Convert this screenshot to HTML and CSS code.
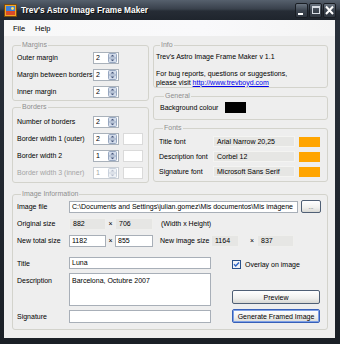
FILE: index.html
```html
<!DOCTYPE html>
<html>
<head>
<meta charset="utf-8">
<link rel="stylesheet" href="styles.css">
</head>
<body>
<div class="win">
  <div class="titlebar">
    <svg class="appicon" width="13" height="13" viewBox="0 0 13 13">
      <rect x="0.5" y="0.5" width="12" height="12" fill="#f4a623" stroke="#7a4a10"/>
      <rect x="2" y="2" width="9" height="9" fill="#3d7fd6"/>
      <rect x="2" y="7" width="9" height="4" fill="#d84a2a"/>
      <circle cx="8.5" cy="4.5" r="1.4" fill="#ffe36a"/>
    </svg>
    <span class="title">Trev's Astro Image Frame Maker</span>
    <div class="capbtns">
      <span class="cbtn"><svg width="13" height="15" viewBox="0 0 13 15"><rect x="3" y="10" width="5" height="2" fill="#fff"/></svg></span>
      <span class="cbtn"><svg width="13" height="15" viewBox="0 0 13 15"><rect x="3.5" y="3.5" width="7" height="7" fill="none" stroke="#d8dde4"/><rect x="3" y="3" width="8" height="2" fill="#d8dde4"/></svg></span>
      <span class="cbtn"><svg width="13" height="15" viewBox="0 0 13 15"><path d="M3 3.5 L10 11 M10 3.5 L3 11" stroke="#fff" stroke-width="2"/></svg></span>
    </div>
  </div>
  <div class="frame">
    <div class="menubar"><span>File</span><span>Help</span></div>
    <div class="client">
      <div class="top">
        <div class="col col-left">
          <fieldset class="grp grp-margins">
            <legend>Margins</legend>
            <div class="row"><span class="lbl">Outer margin</span><span class="numbox"><span class="val">2</span><svg class="spin" width="9" height="10" viewBox="0 0 9 10"><rect x="0.5" y="0.5" width="8" height="9" rx="1" fill="#d3dcea" stroke="#97a7c0"/><line x1="1" y1="5" x2="8" y2="5" stroke="#97a7c0"/><path d="M2.5 3.6 L4.5 1.8 L6.5 3.6Z" fill="#44557a"/><path d="M2.5 6.4 L4.5 8.2 L6.5 6.4Z" fill="#44557a"/></svg></span></div>
            <div class="row"><span class="lbl">Margin between borders</span><span class="numbox"><span class="val">2</span><svg class="spin" width="9" height="10" viewBox="0 0 9 10"><rect x="0.5" y="0.5" width="8" height="9" rx="1" fill="#d3dcea" stroke="#97a7c0"/><line x1="1" y1="5" x2="8" y2="5" stroke="#97a7c0"/><path d="M2.5 3.6 L4.5 1.8 L6.5 3.6Z" fill="#44557a"/><path d="M2.5 6.4 L4.5 8.2 L6.5 6.4Z" fill="#44557a"/></svg></span></div>
            <div class="row"><span class="lbl">Inner margin</span><span class="numbox"><span class="val">2</span><svg class="spin" width="9" height="10" viewBox="0 0 9 10"><rect x="0.5" y="0.5" width="8" height="9" rx="1" fill="#d3dcea" stroke="#97a7c0"/><line x1="1" y1="5" x2="8" y2="5" stroke="#97a7c0"/><path d="M2.5 3.6 L4.5 1.8 L6.5 3.6Z" fill="#44557a"/><path d="M2.5 6.4 L4.5 8.2 L6.5 6.4Z" fill="#44557a"/></svg></span></div>
          </fieldset>
          <fieldset class="grp grp-borders">
            <legend>Borders</legend>
            <div class="row"><span class="lbl">Number of borders</span><span class="numbox"><span class="val">2</span><svg class="spin" width="9" height="10" viewBox="0 0 9 10"><rect x="0.5" y="0.5" width="8" height="9" rx="1" fill="#d3dcea" stroke="#97a7c0"/><line x1="1" y1="5" x2="8" y2="5" stroke="#97a7c0"/><path d="M2.5 3.6 L4.5 1.8 L6.5 3.6Z" fill="#44557a"/><path d="M2.5 6.4 L4.5 8.2 L6.5 6.4Z" fill="#44557a"/></svg></span></div>
            <div class="row"><span class="lbl">Border width 1 (outer)</span><span class="numbox"><span class="val">2</span><svg class="spin" width="9" height="10" viewBox="0 0 9 10"><rect x="0.5" y="0.5" width="8" height="9" rx="1" fill="#d3dcea" stroke="#97a7c0"/><line x1="1" y1="5" x2="8" y2="5" stroke="#97a7c0"/><path d="M2.5 3.6 L4.5 1.8 L6.5 3.6Z" fill="#44557a"/><path d="M2.5 6.4 L4.5 8.2 L6.5 6.4Z" fill="#44557a"/></svg></span><span class="swatch-empty"></span></div>
            <div class="row"><span class="lbl">Border width 2</span><span class="numbox"><span class="val">1</span><svg class="spin" width="9" height="10" viewBox="0 0 9 10"><rect x="0.5" y="0.5" width="8" height="9" rx="1" fill="#d3dcea" stroke="#97a7c0"/><line x1="1" y1="5" x2="8" y2="5" stroke="#97a7c0"/><path d="M2.5 3.6 L4.5 1.8 L6.5 3.6Z" fill="#44557a"/><path d="M2.5 6.4 L4.5 8.2 L6.5 6.4Z" fill="#44557a"/></svg></span><span class="swatch-empty"></span></div>
            <div class="row disabled"><span class="lbl">Border width 3 (inner)</span><span class="numbox"><span class="val">1</span><svg class="spin" width="9" height="10" viewBox="0 0 9 10"><rect x="0.5" y="0.5" width="8" height="9" rx="1" fill="#eef1f5" stroke="#c9d1dc"/><line x1="1" y1="5" x2="8" y2="5" stroke="#c9d1dc"/><path d="M2.5 3.6 L4.5 1.8 L6.5 3.6Z" fill="#b3bccb"/><path d="M2.5 6.4 L4.5 8.2 L6.5 6.4Z" fill="#b3bccb"/></svg></span><span class="swatch-empty"></span></div>
          </fieldset>
        </div>
        <div class="col col-right">
          <fieldset class="grp grp-info">
            <legend>Info</legend>
            <div class="info-text">
              <div>Trev's Astro Image Frame Maker v 1.1</div>
              <div>&nbsp;</div>
              <div>For bug reports, questions or suggestions,</div>
              <div>please visit <span class="link">http://www.trevboyd.com</span></div>
            </div>
          </fieldset>
          <fieldset class="grp grp-general">
            <legend>General</legend>
            <div class="row-g"><span class="lbl-g">Background colour</span><span class="bgcolor"></span></div>
          </fieldset>
          <fieldset class="grp grp-fonts">
            <legend>Fonts</legend>
            <div class="row-f"><span class="lbl-f">Title font</span><span class="fontbox">Arial Narrow 20,25</span><span class="orange"></span></div>
            <div class="row-f"><span class="lbl-f">Description font</span><span class="fontbox">Corbel 12</span><span class="orange"></span></div>
            <div class="row-f"><span class="lbl-f">Signature font</span><span class="fontbox">Microsoft Sans Serif</span><span class="orange"></span></div>
          </fieldset>
        </div>
      </div>
      <fieldset class="grp grp-image">
        <legend>Image Information</legend>
        <div class="row-i">
          <span class="lbl-i">Image file</span>
          <span class="tb tb-file">C:\Documents and Settings\julian.gomez\Mis documentos\Mis imágene</span>
          <span class="btn btn-browse">...</span>
        </div>
        <div class="row-i">
          <span class="lbl-i">Original size</span>
          <span class="ro ro-a">882</span>
          <span class="times">×</span>
          <span class="ro ro-b">706</span>
          <span class="hint">(Width x Height)</span>
        </div>
        <div class="row-i">
          <span class="lbl-i">New total size</span>
          <span class="tb tb-a">1182</span>
          <span class="times">×</span>
          <span class="tb tb-b">855</span>
          <span class="lbl-new">New image size</span>
          <span class="ro ro-c">1164</span>
          <span class="times times-wide">×</span>
          <span class="ro ro-d">837</span>
        </div>
        <div class="bottom">
          <div class="fields">
            <div class="row-t"><span class="lbl-i">Title</span><span class="tb tb-wide">Luna</span></div>
            <div class="row-d"><span class="lbl-i lbl-top">Description</span><span class="tb tb-area">Barcelona, Octubre 2007</span></div>
            <div class="row-s"><span class="lbl-i">Signature</span><span class="tb tb-wide tb-sig"></span></div>
          </div>
          <div class="actions">
            <div class="check-row">
              <svg class="check" width="9" height="9" viewBox="0 0 9 9"><rect x="0.5" y="0.5" width="8" height="8" fill="#eef2f8" stroke="#27508a"/><path d="M2 4.3 L3.7 6 L7 2.6" fill="none" stroke="#2a62c4" stroke-width="1.4"/></svg>
              <span>Overlay on image</span>
            </div>
            <span class="btn btn-act btn-preview">Preview</span>
            <span class="btn btn-act btn-gen">Generate Framed Image</span>
          </div>
        </div>
      </fieldset>
    </div>
  </div>
</div>
</body>
</html>
```

FILE: styles.css
```css
* { box-sizing: border-box; }
html, body { margin: 0; padding: 0; }
body {
  font-family: "Liberation Sans", Arial, sans-serif;
  font-size: 7px;
  color: #000;
  background: #1b2027;
}
.win {
  width: 340px;
  height: 344px;
  display: flex;
  flex-direction: column;
  background: linear-gradient(#2a313b, #1a1f26);
}
.titlebar {
  height: 20px;
  flex: none;
  display: flex;
  align-items: center;
  padding-left: 4px;
  background: linear-gradient(#56606d 0%, #39414c 45%, #262c35 55%, #1f252d 100%);
}
.appicon { flex: none; }
.title {
  margin-left: 4px;
  color: #fff;
  font-weight: bold;
  font-size: 8.3px;
  text-shadow: 1px 1px 0 #111;
  white-space: nowrap;
}
.capbtns {
  margin-left: auto;
  margin-right: 4px;
  display: flex;
  gap: 1px;
}
.cbtn {
  width: 13px;
  height: 15px;
  display: block;
  border: 1px solid #1a1e24;
  border-radius: 2px;
  background: linear-gradient(#6a7480, #3d4550 50%, #2f363f);
}
.cbtn svg { display: block; margin: -1px; }
.frame {
  flex: 1;
  margin: 0 5px 6px 4px;
  display: flex;
  flex-direction: column;
  background: #eeeeee;
}
.menubar {
  height: 16px;
  flex: none;
  display: flex;
  align-items: center;
  gap: 10px;
  padding-left: 9px;
  font-size: 7.5px;
  background: linear-gradient(90deg, #f8f8f8, #f9f9fb 60%, #f4f4f4);
}
.client {
  flex: 1;
  padding: 5px 7px 0 8px;
}
.top {
  display: flex;
  gap: 4px;
  align-items: flex-start;
}
.col { display: flex; flex-direction: column; }
.col-left { width: 137px; gap: 2px; }
.col-right { width: 175px; gap: 4px; }

.grp {
  margin: 0;
  padding: 0;
  min-width: 0;
  border: 1px solid #d3d3cc;
  border-radius: 3px;
}
.grp legend {
  margin-left: 4px;
  padding: 0 1px;
  line-height: 8px;
  font-size: 7px;
  color: #8f8f8f;
}
.grp-margins { padding: 0 0 0 4px; }
.grp-borders { padding: 2px 0 1px 4px; }
.row {
  display: flex;
  align-items: center;
  height: 17px;
}
.lbl { width: 76px; flex: none; white-space: nowrap; }
.numbox {
  width: 26px;
  height: 12px;
  display: flex;
  align-items: center;
  justify-content: space-between;
  border: 1px solid #a9b1ba;
  background: #fff;
  padding: 0 1px 0 2px;
}
.spin { display: block; }
.swatch-empty {
  width: 20px;
  height: 12px;
  margin-left: 4px;
  background: #fff;
  border: 1px solid #dadada;
}
.disabled { color: #a4a4a4; }
.disabled .numbox { border-color: #c9ced4; }

.grp-info { padding: 4px 0 0 2px; }
.info-text div { line-height: 8.5px; height: 8.5px; white-space: nowrap; }
.link { color: #0000ee; text-decoration: underline; }

.grp-general { padding: 0 0 5px 6px; }
.row-g { display: flex; align-items: center; height: 14px; }
.lbl-g { width: 65px; }
.bgcolor { width: 21px; height: 11px; background: #000; }

.grp-fonts { padding: 2px 0 2px 5px; }
.row-f { display: flex; align-items: center; height: 15px; }
.lbl-f { width: 54px; white-space: nowrap; }
.fontbox {
  width: 82px;
  height: 11px;
  line-height: 9px;
  padding-left: 3px;
  background: #e6e6e4;
  border: 1px solid #f4f4f2;
  white-space: nowrap;
}
.orange { width: 21px; height: 10px; margin-left: 4px; background: #ffa500; }

.grp-image { margin-top: 7px; padding: 0 0 6px 4px; }
.row-i { display: flex; align-items: center; height: 17px; }
.lbl-i { width: 52px; flex: none; white-space: nowrap; }
.tb {
  height: 12px;
  line-height: 10px;
  padding-left: 2px;
  background: #fff;
  border: 1px solid #a8afb8;
  white-space: nowrap;
  overflow: hidden;
}
.tb-file { width: 229px; flex: none; }
.btn {
  display: flex;
  align-items: center;
  justify-content: center;
  border: 1px solid #4f5f75;
  border-radius: 2px;
  background: linear-gradient(#ffffff, #f0f0ee 60%, #d8d8d4);
  white-space: nowrap;
}
.btn-browse { width: 20px; flex: none; height: 13px; margin-left: 3px; font-size: 6px; color: #333; }
.ro {
  height: 12px;
  line-height: 10px;
  padding-left: 3px;
  background: #e6e6e4;
  border: 1px solid #efefed;
}
.ro-a, .tb-a { width: 37px; }
.ro-b, .tb-b { width: 38px; }
.times { width: 9px; text-align: center; }
.times-wide { width: 18px; text-align: right; padding-right: 3px; }
.hint { margin-left: 8px; }
.lbl-new { margin-left: 7px; width: 51px; white-space: nowrap; }
.ro-c { width: 28px; }
.ro-d { width: 37px; }

.bottom { display: flex; }
.fields { width: 194px; flex: none; }
.row-t, .row-s { display: flex; align-items: center; }
.row-t { margin-top: 8px; }
.row-d { display: flex; align-items: flex-start; margin-top: 4px; }
.row-s { margin-top: 4px; }
.tb-wide { width: 142px; }
.tb-sig { height: 13px; }
.tb-area { width: 142px; height: 33px; padding-top: 3px; line-height: 8px; }
.lbl-top { padding-top: 4px; }
.actions {
  margin-left: 21px;
  width: 88px;
  display: flex;
  flex-direction: column;
}
.check-row {
  margin-top: 10px;
  height: 10px;
  display: flex;
  align-items: center;
  gap: 4px;
}
.check { display: block; }
.btn-act { height: 14px; }
.btn-preview { margin-top: 21px; }
.btn-gen { margin-top: 5px; box-shadow: inset 0 0 0 1px #7ea0e6; border-color: #3760b8; }
```
